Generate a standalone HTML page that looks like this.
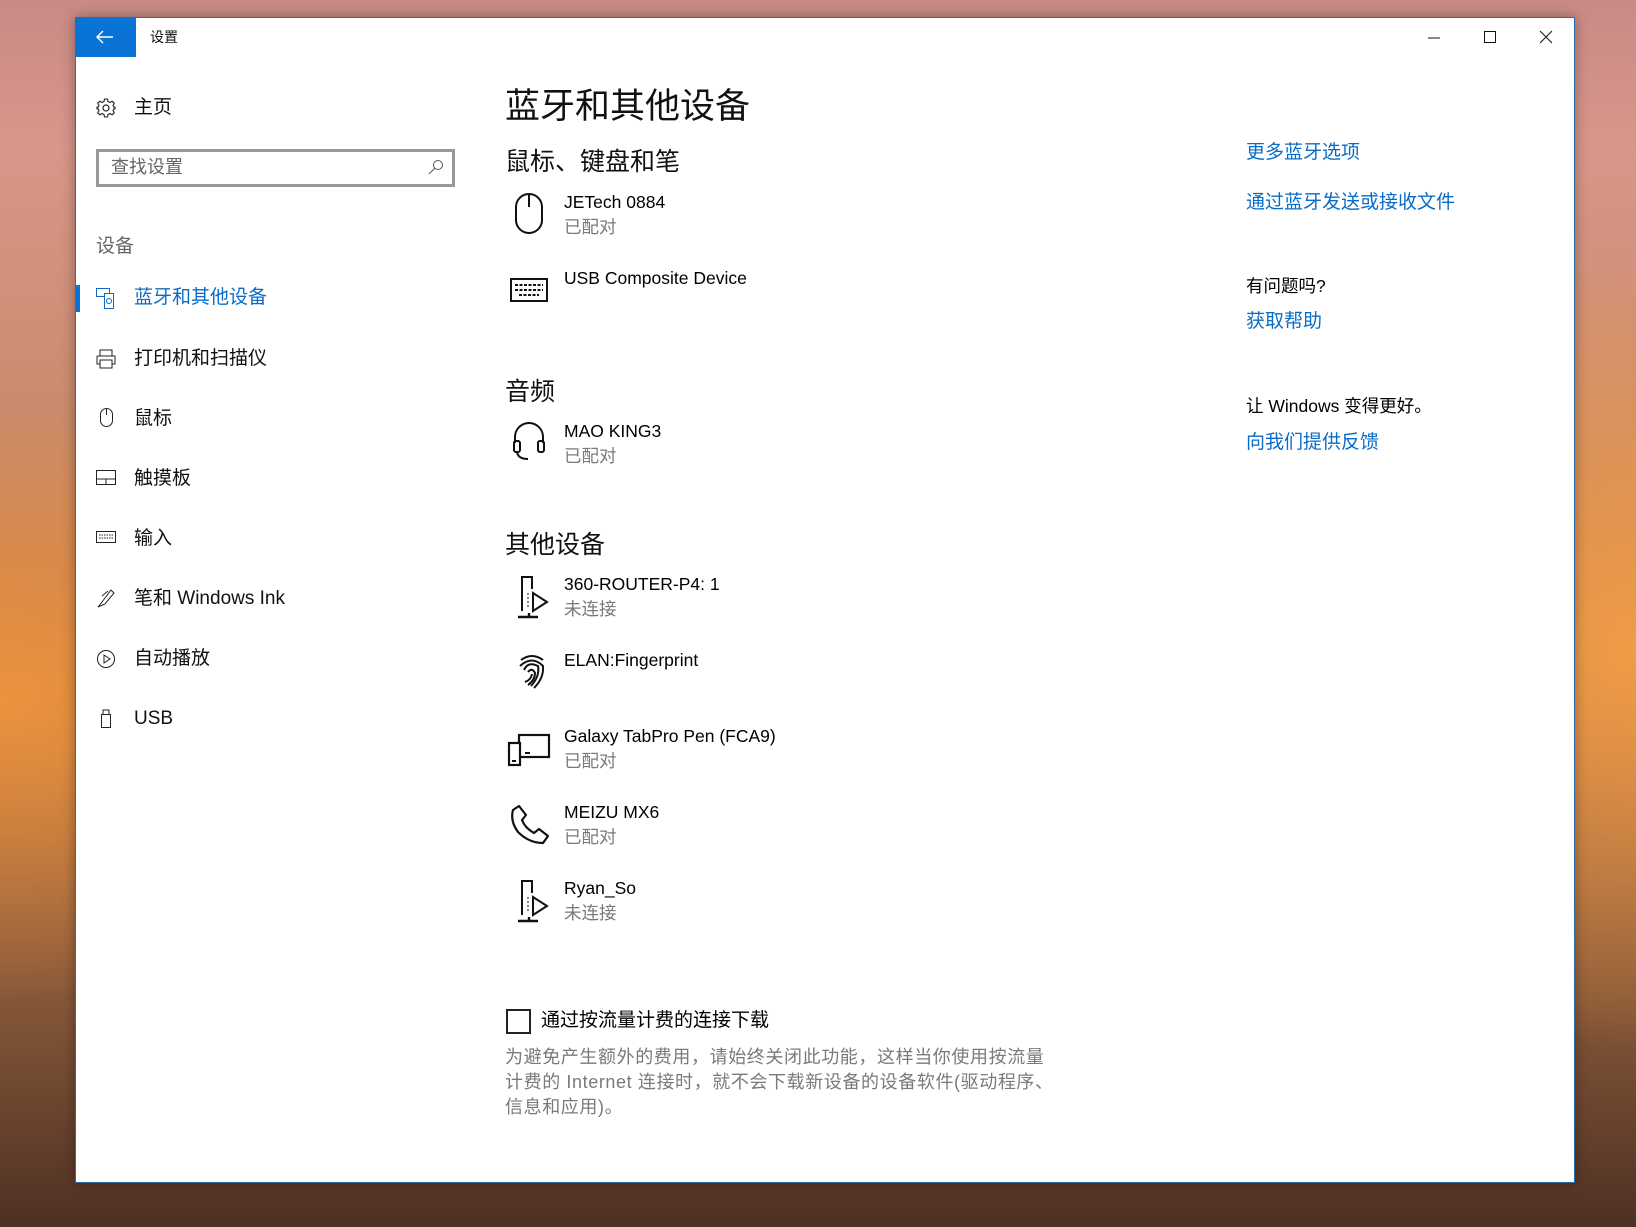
<!DOCTYPE html>
<html><head><meta charset="utf-8"><style>
*{margin:0;padding:0;box-sizing:border-box}
body{width:1636px;height:1227px;overflow:hidden;position:relative;font-family:"Liberation Sans","Noto Sans CJK SC",sans-serif;
background:
radial-gradient(ellipse 500px 300px at 0px 700px,rgba(240,150,60,.9),transparent),
radial-gradient(ellipse 400px 400px at 1636px 650px,rgba(245,160,70,.9),transparent),
linear-gradient(180deg,#c98a86 0%,#d8968a 12%,#c98a6a 35%,#c07848 55%,#8a5a3a 80%,#4e3024 100%);}
.win{position:absolute;left:75px;top:17px;width:1500px;height:1166px;background:#fff;border:1px solid #2f6aa8;box-shadow:0 0 12px rgba(0,0,0,.35)}
.a{position:absolute;white-space:nowrap;line-height:1}
.back{position:absolute;left:0;top:0;width:60px;height:39px;background:#0a74d6}
.nav{font-size:19px;color:#111}
.blue{color:#0a6cc8}
.gray{color:#7a7a7a}
.s{font-size:17.5px}
svg{position:absolute;overflow:visible}
</style></head><body>
<div class="win">
 <div class="back"><svg style="left:20px;top:12px" width="18" height="14" viewBox="0 0 18 14"><path d="M1 7H17M7 1L1 7L7 13" stroke="#fff" stroke-width="1.4" fill="none"/></svg></div>
 <div class="a" style="left:74px;top:12px;font-size:14px;color:#111">设置</div>
 <svg style="left:1352px;top:19px" width="12" height="2"><path d="M0 1H12" stroke="#111"/></svg>
 <svg style="left:1408px;top:13px" width="12" height="12"><rect x=".5" y=".5" width="11" height="11" stroke="#111" fill="none"/></svg>
 <svg style="left:1464px;top:13px" width="12" height="12"><path d="M0 0L12 12M12 0L0 12" stroke="#111"/></svg>

 <svg style="left:20px;top:80px" width="20" height="20" viewBox="0 0 20 20"><circle cx="10" cy="10" r="3" stroke="#222" fill="none" stroke-width="1.2"/><path d="M8.5 1H11.5L12 3.5L14 4.5L16.2 3.2L18.3 5.3L17 7.5L17.8 9.2L19 9V11L17.8 10.8L17 12.5L18.3 14.7L16.2 16.8L14 15.5L12 16.5L11.5 19H8.5L8 16.5L6 15.5L3.8 16.8L1.7 14.7L3 12.5L2.2 10.8L1 11V9L2.2 9.2L3 7.5L1.7 5.3L3.8 3.2L6 4.5L8 3.5Z" stroke="#222" fill="none" stroke-width="1.1" stroke-linejoin="round"/></svg>
 <div class="a nav" style="left:58px;top:80px">主页</div>
 <div style="position:absolute;left:20px;top:131px;width:359px;height:38px;border:3px solid #999"></div>
 <div class="a gray" style="left:35px;top:140px;font-size:18px;color:#666">查找设置</div>
 <svg style="left:352px;top:141px" width="16" height="16"><circle cx="10" cy="6" r="4.5" stroke="#555" fill="none"/><path d="M7 9L1 15" stroke="#555"/></svg>
 <div class="a gray" style="left:20px;top:219px;font-size:19px;color:#666">设备</div>
 <div style="position:absolute;left:0;top:267px;width:4px;height:27px;background:#0a74d6"></div>
 <svg style="left:20px;top:270px" width="20" height="22"><rect x=".5" y=".5" width="13" height="8" stroke="#0a6cc8" fill="none"/><rect x="8.5" y="5.5" width="9" height="15" stroke="#0a6cc8" fill="#fff"/><circle cx="13" cy="13" r="2.5" stroke="#0a6cc8" fill="none"/></svg>
 <div class="a nav blue" style="left:58px;top:270px">蓝牙和其他设备</div>
 <svg style="left:20px;top:331px" width="20" height="20"><path d="M4 7V1H16V7M1 7H19V15H16M4 15H1V7M4 11H16V19H4Z" stroke="#222" fill="none"/></svg>
 <div class="a nav" style="left:58px;top:331px">打印机和扫描仪</div>
 <svg style="left:24px;top:390px" width="14" height="20"><rect x=".5" y=".5" width="12" height="18" rx="6" stroke="#222" fill="none"/><path d="M6.5 1V7" stroke="#222"/></svg>
 <div class="a nav" style="left:58px;top:391px">鼠标</div>
 <svg style="left:20px;top:452px" width="20" height="16"><rect x=".5" y=".5" width="19" height="14" stroke="#222" fill="none"/><path d="M1 9H19M10 9V15" stroke="#222"/></svg>
 <div class="a nav" style="left:58px;top:451px">触摸板</div>
 <svg style="left:20px;top:513px" width="20" height="12"><rect x=".5" y=".5" width="19" height="11" stroke="#222" fill="none"/><path d="M3 4H17M3 7H17" stroke="#222" stroke-dasharray="1.5 1"/></svg>
 <div class="a nav" style="left:58px;top:511px">输入</div>
 <svg style="left:20px;top:570px" width="20" height="20"><path d="M2 19L6 14L15 2L18 5L9 16ZM12 3L6 8" stroke="#222" fill="none"/></svg>
 <div class="a nav" style="left:58px;top:571px">笔和 Windows Ink</div>
 <svg style="left:20px;top:631px" width="20" height="20"><circle cx="10" cy="10" r="8.5" stroke="#222" fill="none"/><path d="M8 6L14 10L8 14Z" stroke="#222" fill="none"/></svg>
 <div class="a nav" style="left:58px;top:631px">自动播放</div>
 <svg style="left:23px;top:691px" width="14" height="20"><rect x="2.5" y="5.5" width="9" height="13" stroke="#222" fill="none"/><path d="M4 5V1H10V5" stroke="#222" fill="none"/></svg>
 <div class="a nav" style="left:58px;top:691px">USB</div>

 <div class="a" style="left:429px;top:71px;font-size:35px;color:#111">蓝牙和其他设备</div>
 <div class="a" style="left:429px;top:132px;font-size:25px;color:#111">鼠标、键盘和笔</div>
 <svg style="left:439px;top:175px" width="28" height="42"><rect x="1" y="1" width="26" height="39" rx="13" stroke="#111" fill="none" stroke-width="2"/><path d="M14 1V14" stroke="#111" stroke-width="2"/></svg>
 <div class="a s" style="left:488px;top:176px">JETech 0884</div>
 <div class="a s gray" style="left:488px;top:201px">已配对</div>
 <svg style="left:434px;top:260px" width="38" height="24"><rect x="1" y="1" width="36" height="22" stroke="#111" fill="none" stroke-width="2"/><path d="M5 7H33M5 12H33M9 17H29" stroke="#111" stroke-width="2" stroke-dasharray="3 1.5"/></svg>
 <div class="a s" style="left:488px;top:252px">USB Composite Device</div>

 <div class="a" style="left:429px;top:362px;font-size:25px;color:#111">音频</div>
 <svg style="left:436px;top:403px" width="34" height="40"><path d="M3 22V16A14 14 0 0 1 31 16V22" stroke="#111" fill="none" stroke-width="2"/><rect x="2" y="20" width="6" height="11" rx="2" stroke="#111" fill="none" stroke-width="2"/><rect x="26" y="20" width="6" height="11" rx="2" stroke="#111" fill="none" stroke-width="2"/><path d="M5 31Q6 38 16 38" stroke="#111" fill="none" stroke-width="2"/></svg>
 <div class="a s" style="left:488px;top:405px">MAO KING3</div>
 <div class="a s gray" style="left:488px;top:430px">已配对</div>

 <div class="a" style="left:429px;top:515px;font-size:25px;color:#111">其他设备</div>
 <svg style="left:442px;top:557px" width="32" height="44"><path d="M4 36V2H14V14" stroke="#111" fill="none" stroke-width="2"/><path d="M15 18L29 27L15 36Z" stroke="#111" fill="none" stroke-width="2"/><path d="M0 42H20M11 38V42" stroke="#111" stroke-width="2.4"/><path d="M10 18V32" stroke="#111" stroke-dasharray="2 2"/></svg>
 <div class="a s" style="left:488px;top:558px">360-ROUTER-P4: 1</div>
 <div class="a s gray" style="left:488px;top:583px">未连接</div>
 <svg style="left:442px;top:634px" width="28" height="38" viewBox="0 0 28 38"><path d="M3 8Q14 0 25 8M2 14Q14 3 25 14Q26 26 16 36M6 18Q10 9 20 14Q22 24 13 34M10 20Q14 15 17 21Q17 28 10 33M14 22Q13 28 7 30" stroke="#111" fill="none" stroke-width="2"/></svg>
 <div class="a s" style="left:488px;top:634px">ELAN:Fingerprint</div>
 <svg style="left:432px;top:716px" width="42" height="32"><rect x="11" y="1" width="30" height="22" stroke="#111" fill="none" stroke-width="2.2"/><rect x="1" y="9" width="11" height="22" stroke="#111" fill="#fff" stroke-width="2.2"/><path d="M4 27H8M17 19H22" stroke="#111" stroke-width="2"/></svg>
 <div class="a s" style="left:488px;top:710px">Galaxy TabPro Pen (FCA9)</div>
 <div class="a s gray" style="left:488px;top:735px">已配对</div>
 <svg style="left:433px;top:786px" width="42" height="42" viewBox="0 0 42 42"><path d="M10 2L17 11L13 16Q16 24 25 29L30 25L39 32L34 39Q20 39 9 28Q1 17 4 6Z" stroke="#111" fill="none" stroke-width="2.2" stroke-linejoin="round"/></svg>
 <div class="a s" style="left:488px;top:786px">MEIZU MX6</div>
 <div class="a s gray" style="left:488px;top:811px">已配对</div>
 <svg style="left:442px;top:861px" width="32" height="44"><path d="M4 36V2H14V14" stroke="#111" fill="none" stroke-width="2"/><path d="M15 18L29 27L15 36Z" stroke="#111" fill="none" stroke-width="2"/><path d="M0 42H20M11 38V42" stroke="#111" stroke-width="2.4"/><path d="M10 18V32" stroke="#111" stroke-dasharray="2 2"/></svg>
 <div class="a s" style="left:488px;top:862px">Ryan_So</div>
 <div class="a s gray" style="left:488px;top:887px">未连接</div>

 <div style="position:absolute;left:430px;top:991px;width:25px;height:25px;border:2px solid #222"></div>
 <div class="a" style="left:465px;top:993px;font-size:19px">通过按流量计费的连接下载</div>
 <div class="a gray" style="left:429px;top:1030px;font-size:18px;letter-spacing:0.6px">为避免产生额外的费用，请始终关闭此功能，这样当你使用按流量</div>
 <div class="a gray" style="left:429px;top:1055px;font-size:18px;letter-spacing:0.6px">计费的 Internet 连接时，就不会下载新设备的设备软件(驱动程序、</div>
 <div class="a gray" style="left:429px;top:1080px;font-size:18px;letter-spacing:0.6px">信息和应用)。</div>

 <div class="a blue" style="left:1170px;top:125px;font-size:19px">更多蓝牙选项</div>
 <div class="a blue" style="left:1170px;top:175px;font-size:19px">通过蓝牙发送或接收文件</div>
 <div class="a s" style="left:1170px;top:260px">有问题吗?</div>
 <div class="a blue" style="left:1170px;top:294px;font-size:19px">获取帮助</div>
 <div class="a s" style="left:1170px;top:380px">让 Windows 变得更好。</div>
 <div class="a blue" style="left:1170px;top:415px;font-size:19px">向我们提供反馈</div>
</div>
</body></html>
